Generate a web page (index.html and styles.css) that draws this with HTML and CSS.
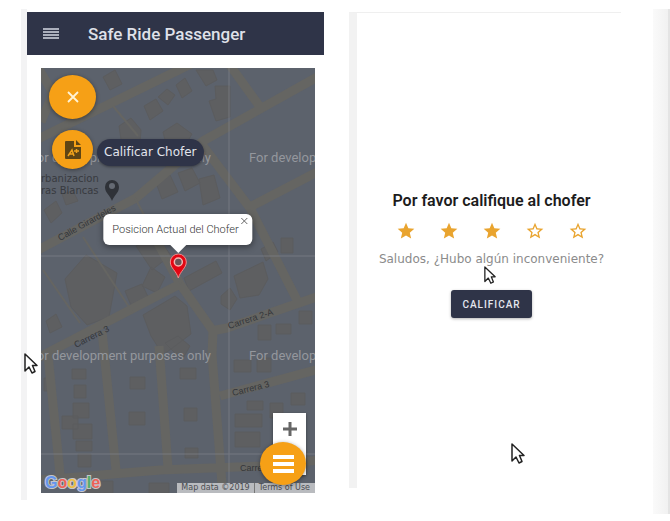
FILE: index.html
```html
<!DOCTYPE html>
<html lang="es">
<head>
<meta charset="utf-8">
<meta name="viewport" content="width=device-width, initial-scale=1">
<title>Safe Ride Passenger</title>
<link rel="stylesheet" href="styles.css">
</head>
<body>
<svg width="0" height="0" class="defs" aria-hidden="true">
  <symbol id="cursor" viewBox="0 0 14 22"><path d="M1 1v17l4-4 3 6 3-1.500-2.500-6H13z" fill="#fff" stroke="#222" stroke-width="1.500" stroke-linejoin="round"/></symbol>
  <symbol id="star" viewBox="0 0 24 24"><path d="M12 17.270 18.180 21l-1.640-7.030L22 9.240l-7.190-.61L12 2 9.190 8.630 2 9.240l5.460 4.730L5.820 21z"/></symbol>
  <symbol id="star-outline" viewBox="0 0 24 24"><path d="m22 9.240-7.190-.62L12 2 9.190 8.630 2 9.240l5.460 4.730L5.820 21 12 17.270 18.180 21l-1.630-7.030zM12 15.400l-3.760 2.270 1-4.280-3.320-2.880 4.380-.38L12 6.100l1.710 4.040 4.380.38-3.320 2.880 1 4.280z"/></symbol>
</svg>
<main class="board">
  <section class="screen screen-map">
    <header class="topbar">
      <button class="menu" aria-label="Menú"><svg viewBox="0 0 16 11"><path d="M0 1h16M0 4h16M0 7h16M0 10h16" stroke="#d5d8e2" stroke-width="1.300"/></svg></button>
      <h1>Safe Ride Passenger</h1>
    </header>
    <div class="map">
      <svg class="map-art" viewBox="0 0 274 425" preserveAspectRatio="xMidYMid slice">
        <rect width="274" height="425" fill="#5c626c"/>
        <g fill="#5e5f61" stroke="#5b5c5e">
          <path d="m62 9 12-7 7 14-12 6zM103 38l12-7 7 12-13 9zM117 29l9-8 8 6-7 10zM135 17l9-7 7 13-10 7zM155 2h17l4 10-11 6zM174 18h15v31l-14 4-7-20 7-2zM78 58l12-8 10 12-1 13-18 3zM122 64l14-9 15 11-9 15-16-1zM3 142l12-9 6 12-11 10zM21 126l11-3 5 10-12 4zM114 112l15-5 8 17-16 7zM137 105l14-5 8 15-15 8zM158 111l15-4 6 23-17 7zM220 181l12-7 5 10-12 9zM240 170h12v15h-12zM95 178l20-9 15 18-19 15zM24 211l21-24 31 18-8 44-22 8-16-18zM84 223l17-7 8 17-17 9zM110 199l14 10-8 16-15-7zM143 210l32-17 6 12-33 18zM193 208l29-14 5 17-9 16-19 3zM180 228l9-8 7 11-7 11-9-6zM102 247l32-19 12 10 4 28-28 21-12-19zM5 253l10-7 6 13-12 6zM124 275l13-7 12 10-8 14zM235 256h15v10h-15zM217 257h13v15h-13zM258 243h13v13h-13z"/>
          <path d="M31 301h14v10H31zM33 317h12v13H33zM32 335h16v15H32zM21 348h16v13H21zM32 356h19v15H32zM35 373h16v10H35zM37 386h13v13H37zM88 344h16v13H88zM139 300h16v11h-16zM143 340h13v13h-13zM144 380h13v10h-13zM193 292h17v12h-17zM216 290h14v14h-14zM206 333h16v9h-16zM194 346h27v13h-27zM194 364h25v15h-25zM229 335h13v15h-13zM250 325h14v12h-14zM46 413h26v12H46zM108 415h20v10h-20zM89 309h15v12H89zM3 310h9v13H3z"/>
        </g>
        <g fill="none" stroke="#656562" stroke-linejoin="round">
          <path stroke-width="9" d="M-4-2 12 25 0 54M-5 72 150-4M188-4l34 47M278 8 162 73 95 130-5 183M162 78l47 62 47 92M278 103l-69 36M278 228l-92 32-16 3M106 155l33 61 33 47-1 24 11 142M139 216 12 282l-17 9M278 301l-99 27M-5 412l30-2 94-8 101-4 58-6M7 287l12 119M61 263l14 139M118 278l9 122"/>
          <path stroke-width="2" d="m42 169 50 76M2 202l37 53M94 130l46 86M72 38l25 30"/>
        </g>
        <path d="M188 0v425M0 188h274M0 386h274" stroke="#858891" stroke-width="1" opacity=".6"/>
        <g class="road-names">
          <text transform="translate(19 173) rotate(-29)">Calle Girardeles</text>
          <text transform="translate(35 280) rotate(-27)">Carrera 3</text>
          <text transform="translate(188 261) rotate(-18)">Carrera 2-A</text>
          <text transform="translate(192 328) rotate(-14)">Carrera 3</text>
          <text x="199" y="403">Carrera 3</text>
        </g>
        <g class="place"><text x="0" y="114">rbanizacion</text><text x="0" y="126">ras Blancas</text></g>
        <path d="M71 133c-2-6-7-8-7-14a7 7 0 0 1 14 0c0 6-5 8-7 14z" fill="#2f3238"/><circle cx="71" cy="118" r="3" fill="#656a73"/>
        <g class="watermark">
          <text x="170" y="94" text-anchor="end">For development purposes only</text>
          <text x="208" y="94">For develop</text>
          <text x="170" y="292" text-anchor="end">For development purposes only</text>
          <text x="208" y="292">For develop</text>
        </g>
        <g class="google"><text x="4" y="420"><tspan fill="#6495ed">G</tspan><tspan fill="#ed6258">o</tspan><tspan fill="#edbd45">o</tspan><tspan fill="#6495ed">g</tspan><tspan fill="#51ad69">l</tspan><tspan fill="#ed6258">e</tspan></text></g>
      </svg>

      <div class="actions">
        <button class="fab fab-close" aria-label="Cerrar"><svg viewBox="0 0 12 12"><path d="m1 1 10 10M11 1 1 11" stroke="#fff3d6" stroke-width="1.800"/></svg></button>
        <div class="action">
          <button class="fab fab-small" id="rate" aria-label="Calificar Chofer"><svg viewBox="0 0 18 20"><path d="M2 1h8v6h7v11q0 1-1 1H2q-1 0-1-1V2q0-1 1-1zM12 0l5 5h-5z" fill="#5f4514"/><path d="m4 16 4-6 2 6M5 14h4M10 11h5M12.500 9v4" stroke="#f0a21c" stroke-width="1.500" fill="none"/></svg></button>
          <label class="action-label" for="rate">Calificar Chofer</label>
        </div>
      </div>

      <div class="driver">
        <div class="bubble">Posicion Actual del Chofer<button class="bubble-close" aria-label="Cerrar aviso"><svg viewBox="0 0 8 8"><path d="m1 1 6 6M7 1 1 7" stroke="#666"/></svg></button></div>
        <svg class="pin" viewBox="0 0 18 26"><path d="M9 25C7 18 1 15 1 9a8 8 0 0 1 16 0c0 6-6 9-8 16z" fill="#e30613" stroke="#f08a8a"/><circle cx="9" cy="9" r="4" fill="#6b5558" stroke="#f3b5b0" stroke-width="1.500"/></svg>
      </div>

      <div class="zoom"><button aria-label="Acercar"><svg viewBox="0 0 16 16"><path d="M8 1v14M1 8h14" stroke="#666" stroke-width="3"/></svg></button><button aria-label="Alejar"></button></div>
      <div class="credits"><span>Map data ©2019</span><a href="#">Terms of Use</a></div>
      <button class="fab fab-list" aria-label="Opciones"><svg viewBox="0 0 21 18"><path d="M0 2h21M0 9h21M0 16h21" stroke="#fff" stroke-width="4"/></svg></button>
    </div>
    <svg class="cursor cursor-edge"><use href="#cursor"/></svg>
  </section>

  <section class="screen screen-rate">
    <form class="rating">
      <h2>Por favor califique al chofer</h2>
      <div class="stars">
        <button type="button" aria-label="1 estrella"><svg><use href="#star"/></svg></button>
        <button type="button" aria-label="2 estrellas"><svg><use href="#star"/></svg></button>
        <button type="button" aria-label="3 estrellas"><svg><use href="#star"/></svg></button>
        <button type="button" aria-label="4 estrellas"><svg><use href="#star-outline"/></svg></button>
        <button type="button" aria-label="5 estrellas"><svg><use href="#star-outline"/></svg></button>
      </div>
      <p>Saludos, ¿Hubo algún inconveniente?</p>
      <button type="button" class="submit">CALIFICAR</button>
    </form>
    <svg class="cursor cursor-form"><use href="#cursor"/></svg>
    <svg class="cursor cursor-bottom"><use href="#cursor"/></svg>
  </section>
  <div class="edge"></div>
</main>
</body>
</html>
```
FILE: styles.css
```css
* { box-sizing: border-box; }
body { margin: 0; background: #fff; font-family: Roboto, sans-serif; }
button { border: 0; padding: 0; background: none; font: inherit; cursor: pointer; }
h1, h2, p { margin: 0; }
svg { display: block; }
.defs { position: absolute; }

.board { display: grid; grid-template-columns: 303fr 272fr 24px; column-gap: 25px; align-items: start; padding: 9px 0 0 21px; }
.screen { position: relative; }
.screen-map { border-left: 6px solid #f3f3f4; padding: 3px 0 7px; }
.screen-rate {
  margin-top: 3px;
  min-height: 476px;
  border-left: 8px solid #f2f2f2;
  border-top: 1px solid #efefef;
  padding-top: 177px;
}
.edge { justify-self: end; width: 17px; height: 505px; background: linear-gradient(90deg, #fafafa, #f1f1f1); border-right: 2px solid #e4e4e4; }

.topbar { display: flex; align-items: center; gap: 29px; height: 43px; padding-left: 16px; background: #2f3448; }
.topbar h1 { color: #dfe1e9; font-size: 17px; font-weight: 500; }
.menu svg { width: 16px; height: 11px; }

.map { position: relative; margin: 13px 9px 0 14px; aspect-ratio: 274 / 425; overflow: hidden; }
.map-art { width: 100%; height: 100%; }
.road-names { font: 9px "Liberation Sans", sans-serif; fill: #34363a; }
.place { font: 10px "DejaVu Sans", sans-serif; fill: #383a3f; }
.watermark { font: 13px Roboto, sans-serif; fill: #94979d; }
.google { font: bold 16px "Liberation Sans", sans-serif; stroke: #c4c6cc; stroke-width: 2px; paint-order: stroke; }

.fab { display: grid; place-items: center; border-radius: 50%; background: #f6a016; box-shadow: 0 1px 4px rgba(0, 0, 0, .4); }
.actions { position: absolute; left: 8px; top: 7px; display: flex; flex-direction: column; gap: 11px; }
.action { display: flex; align-items: center; gap: 4px; padding-left: 3px; }
.fab-close { width: 47px; height: 44px; }
.fab-close svg { width: 12px; height: 12px; }
.fab-small { width: 41px; height: 39px; }
.fab-small svg { width: 18px; height: 20px; }
.action-label {
  margin-top: 6px;
  padding: 0 7px;
  border-radius: 14px;
  background: #2f3448;
  box-shadow: 0 1px 3px rgba(0, 0, 0, .4);
  color: #e2e4ec;
  font: 12px/27px "DejaVu Sans", sans-serif;
  white-space: nowrap;
}

.driver { position: absolute; left: 50%; top: 146px; transform: translateX(-50%); display: flex; flex-direction: column; align-items: center; gap: 8px; }
.bubble { position: relative; padding: 0 14px 0 9px; border-radius: 6px; background: #fff; box-shadow: 0 2px 6px rgba(0, 0, 0, .4); color: #333; font-size: 11px; font-weight: 300; line-height: 31px; white-space: nowrap; }
.bubble::after { content: ""; position: absolute; left: 50%; top: 100%; margin-left: -8px; border: 8px solid transparent; border-top-color: #fff; border-bottom: 0; }
.bubble-close { position: absolute; right: 4px; top: 3px; }
.bubble-close svg { width: 8px; height: 8px; }
.pin { width: 18px; height: 26px; }

.zoom { position: absolute; right: 9px; bottom: 18px; display: grid; background: #fff; box-shadow: 0 1px 3px rgba(0, 0, 0, .4); }
.zoom button { display: grid; place-items: center; width: 33px; height: 31px; }
.zoom svg { width: 16px; height: 16px; }
.credits { position: absolute; right: 0; bottom: 0; display: flex; gap: 4px; padding: 0 5px 0 4px; background: #b9bbbf; color: #4a4b50; font: 8px/10px "DejaVu Sans", sans-serif; white-space: nowrap; }
.credits a { padding-left: 4px; border-left: 1px solid #777; color: inherit; text-decoration: none; }
.fab-list { position: absolute; right: 9px; bottom: 8px; width: 46px; height: 43px; }
.fab-list svg { width: 21px; height: 18px; }

.rating { display: flex; flex-direction: column; align-items: center; padding-left: 5px; }
.rating h2 { color: #1c1c1c; font-size: 16px; font-weight: 600; line-height: 22px; white-space: nowrap; }
.stars { display: flex; gap: 23px; margin-top: 9px; }
.stars svg { width: 20px; height: 20px; fill: #e9a42f; }
.rating p { margin-top: 10px; color: #8b8b8b; font: 12px/16px "DejaVu Sans", sans-serif; white-space: nowrap; }
.submit { margin-top: 23px; width: 81px; height: 28px; border-radius: 3px; background: #2f3448; box-shadow: 0 1px 3px rgba(0, 0, 0, .3); color: #e4e6ee; font-size: 10px; font-weight: 500; letter-spacing: 1px; }

.cursor { position: absolute; width: 14px; height: 22px; }
.cursor-edge { left: -3px; top: 344px; }
.cursor-form { left: 127px; top: 253px; width: 12px; height: 19px; }
.cursor-bottom { left: 154px; top: 430px; }
```
